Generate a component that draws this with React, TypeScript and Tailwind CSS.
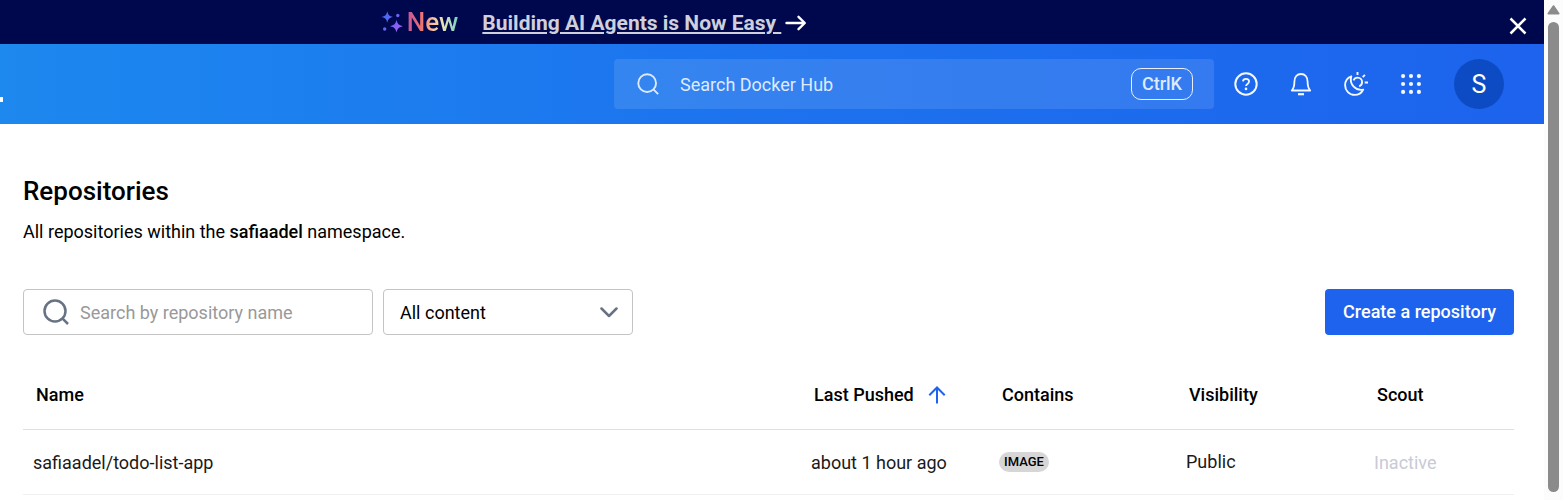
import type { ReactNode } from "react";

type Repository = {
  name: string;
  lastPushed: string;
  contains: string;
  visibility: string;
  scout: string;
};

const repositories: Repository[] = [
  {
    name: "safiaadel/todo-list-app",
    lastPushed: "about 1 hour ago",
    contains: "IMAGE",
    visibility: "Public",
    scout: "Inactive",
  },
];

function SearchIcon({ className, strokeWidth }: { className: string; strokeWidth: number }) {
  return (
    <svg viewBox="0 0 26 26" fill="none" stroke="currentColor" strokeWidth={strokeWidth} className={className} aria-hidden="true">
      <circle cx="12" cy="12" r="10.5" />
      <path d="M19.4 19.4 25 25" />
    </svg>
  );
}

function Sparkles() {
  return (
    <svg viewBox="0 0 22 22" className="h-[22px] w-[22px]" aria-hidden="true">
      <defs>
        <linearGradient id="sparkle" gradientUnits="userSpaceOnUse" x1="2" y1="4" x2="20" y2="18">
          <stop offset="0" stopColor="#3f6cf0" />
          <stop offset="0.5" stopColor="#6b62f2" />
          <stop offset="1" stopColor="#a35cf5" />
        </linearGradient>
      </defs>
      <g fill="url(#sparkle)">
        <path d="M6.3 0.3C7.200 4.100 8.200 5.100 12 6 8.200 6.900 7.200 7.900 6.300 11.700 5.400 7.900 4.400 6.900 0.600 6 4.400 5.100 5.400 4.100 6.300 0.300Z" />
        <path d="M15.500 8.800C16.500 13 17.700 14.200 21.900 15.200 17.700 16.200 16.500 17.400 15.500 21.600 14.500 17.400 13.300 16.200 9.100 15.200 13.300 14.200 14.500 13 15.500 8.800Z" />
        <circle cx="16.800" cy="4.500" r="1.700" />
        <circle cx="3.700" cy="18" r="1.700" />
      </g>
    </svg>
  );
}

function HelpIcon() {
  return (
    <svg viewBox="0 0 24 24" fill="none" stroke="currentColor" strokeWidth="2" className="h-6 w-6" aria-hidden="true">
      <circle cx="12" cy="12" r="10.700" />
      <path d="M8.900 9.400C9.200 7.700 10.400 6.900 12 6.900c1.800 0 3.100 1.100 3.100 2.700 0 2.300-3.100 2.300-3.100 4.500" strokeWidth="1.800" />
      <circle cx="12" cy="16.900" r="1.300" fill="currentColor" stroke="none" />
    </svg>
  );
}

function BellIcon() {
  return (
    <svg viewBox="0 0 24 24" fill="none" stroke="currentColor" strokeWidth="1.800" strokeLinejoin="round" className="h-6 w-6" aria-hidden="true">
      <path d="M2.800 18.500C4.600 16.500 5.400 13.500 5.400 9.800 5.400 5.100 8 2 12 2s6.600 3.100 6.600 7.800c0 3.700.8 6.700 2.600 8.700Z" />
      <path d="M9 22.200h6" strokeWidth="2.200" />
    </svg>
  );
}

function ThemeIcon() {
  return (
    <svg viewBox="0 0 24 24" fill="none" stroke="currentColor" strokeWidth="1.900" strokeLinejoin="round" className="h-6 w-6" aria-hidden="true">
      <path d="M7.300 4.300C3.500 5.700 1.100 9.200 1.100 13.200c0 5.400 4.200 9.700 9.600 9.700 3.700 0 6.900-2 8.500-5.300C12.200 19 4.800 12.500 7.300 4.300Z" />
      <path d="M9.500 8.400c.7-1.700 2.200-2.800 4.100-2.800 2.500 0 4.500 2 4.500 4.500 0 2-1.200 3.600-2.900 4.200" />
      <path d="M13.500 0v3M18.700 5.100l2.200-2.200M20.700 10.500H24" />
    </svg>
  );
}

function AppsIcon() {
  const stops = [2.3, 11, 19.7];
  return (
    <svg viewBox="0 0 22 22" fill="currentColor" className="h-5 w-5" aria-hidden="true">
      {stops.map((y) => stops.map((x) => <circle key={`${x}-${y}`} cx={x} cy={y} r="2.300" />))}
    </svg>
  );
}

function IconButton({ label, children }: { label: string; children: ReactNode }) {
  return (
    <button type="button" aria-label={label} className="flex h-10 w-10 items-center justify-center text-[#f3f7ff]">
      {children}
    </button>
  );
}

function Banner() {
  return (
    <div className="flex h-11 items-center bg-[#00084d] pr-4">
      <div className="flex flex-1 items-center justify-center pr-80">
        <Sparkles />
        <span className="ml-1 bg-[linear-gradient(90deg,#c4559a_0%,#ea7070_28%,#f9c59a_52%,#e6e6b4_72%,#74d0c4_100%)] bg-clip-text text-[26px] leading-8 font-medium text-transparent">
          New
        </span>
        <a href="#agents" className="ml-6 flex items-center gap-1 pt-[2px] text-[21px] leading-6 font-bold text-[#cfd0dc]">
          <span className="whitespace-pre underline decoration-2 underline-offset-2">{"Building AI Agents is Now Easy "}</span>
          <svg viewBox="0 0 22 16" fill="none" stroke="#fff" strokeWidth="2.400" strokeLinecap="round" strokeLinejoin="round" className="h-4 w-[22px]" aria-hidden="true">
            <path d="M1.500 8h18M13.500 1.800 19.800 8l-6.300 6.200" />
          </svg>
        </a>
      </div>
      <button type="button" aria-label="Close" className="mt-2 flex h-5 w-5 items-center justify-center text-white">
        <svg viewBox="0 0 18 18" fill="none" stroke="currentColor" strokeWidth="2.500" className="h-[18px] w-[18px]" aria-hidden="true">
          <path d="M1.500 1.500l15 15M16.500 1.500l-15 15" />
        </svg>
      </button>
    </div>
  );
}

function Header() {
  return (
    <header className="flex h-20 items-center bg-linear-to-r from-[#1d88ee] via-[#1d72ee] to-[#1d63ed] pr-10">
      <span className="mt-[31px] h-[5px] w-[3px] bg-white" />
      <div className="ml-auto flex h-[50px] w-[600px] items-center rounded bg-white/11 pr-[21px] pl-[23px] text-[#dfeaff]">
        <SearchIcon className="h-[22px] w-[22px] shrink-0" strokeWidth={2.2} />
        <input
          type="text"
          aria-label="Search Docker Hub"
          placeholder="Search Docker Hub"
          className="ml-[21px] h-[30px] min-w-0 flex-1 bg-transparent text-lg outline-none placeholder:text-[#dfeaff]"
        />
        <kbd className="flex h-8 items-center rounded-[10px] border border-[#e8f0ff] px-[10px] font-['Roboto',sans-serif] text-lg font-medium">
          CtrlK
        </kbd>
      </div>
      <nav className="ml-3 flex items-center gap-[15px]">
        <IconButton label="Help"><HelpIcon /></IconButton>
        <IconButton label="Notifications"><BellIcon /></IconButton>
        <IconButton label="Theme"><ThemeIcon /></IconButton>
        <IconButton label="Apps"><AppsIcon /></IconButton>
      </nav>
      <button type="button" className="ml-[23px] flex h-[50px] w-[50px] items-center justify-center rounded-full bg-[#0d4bc4] pt-[2px] text-[25px] text-white">
        S
      </button>
    </header>
  );
}

function Toolbar() {
  return (
    <div className="mt-[43px] flex items-center gap-[10px]">
      <div className="flex h-[46px] w-[350px] items-center rounded border border-[#c4c4c4] pl-[19px] text-[#677285]">
        <SearchIcon className="h-[26px] w-[26px] shrink-0" strokeWidth={2.5} />
        <input
          type="text"
          aria-label="Search by repository name"
          placeholder="Search by repository name"
          className="ml-[11px] h-[30px] min-w-0 flex-1 bg-transparent text-lg text-black outline-none placeholder:text-[#999]"
        />
      </div>
      <div className="relative w-[250px]">
        <select aria-label="Content type" className="h-[46px] w-full appearance-none rounded border border-[#c4c4c4] bg-white pt-[2px] pl-4 text-lg text-black">
          <option>All content</option>
        </select>
        <svg viewBox="0 0 18 11" fill="none" stroke="#677285" strokeWidth="2.500" strokeLinecap="round" strokeLinejoin="round" className="pointer-events-none absolute top-[18px] right-[15px] h-[11px] w-[18px]" aria-hidden="true">
          <path d="M1.500 1.500 9 9l7.500-7.500" />
        </svg>
      </div>
      <button type="button" className="ml-auto h-[46px] rounded bg-[#1d63ed] px-[18px] text-lg font-medium text-white">
        Create a repository
      </button>
    </div>
  );
}

function RepositoryTable() {
  return (
    <table className="mt-[25px] w-full table-fixed text-left text-lg">
      <thead>
        <tr className="h-[69px] border-b border-[#e0e0e0] text-black">
          <th className="pt-px pl-[13px] font-medium">Name</th>
          <th className="w-[188px] pt-px pl-[13px] font-medium">
            <span className="flex items-center gap-[14px]">
              Last Pushed
              <svg viewBox="0 0 18 18" fill="none" stroke="#1d63ed" strokeWidth="2" className="h-[18px] w-[18px]" aria-hidden="true">
                <path d="M9 17.500V1.800M1.300 9.200 9 1.500l7.700 7.700" />
              </svg>
            </span>
          </th>
          <th className="w-[187px] pt-px pl-[13px] font-medium">Contains</th>
          <th className="w-[188px] pt-px pl-[13px] font-medium">Visibility</th>
          <th className="w-[150px] pt-px pl-[13px] font-medium">Scout</th>
        </tr>
      </thead>
      <tbody>
        {repositories.map((repo) => (
          <tr key={repo.name} className="h-[65px] border-b border-[#f0f0f0] text-[#1a1a1a]">
            <td className="pt-[2px] pl-[10px]">{repo.name}</td>
            <td className="pt-[2px] pl-[10px]">{repo.lastPushed}</td>
            <td className="pl-[10px]">
              <span className="flex h-5 w-fit items-center rounded-full bg-[#d6d6d6] px-[5px] pt-[2px] text-[13px] font-medium text-black">
                {repo.contains}
              </span>
            </td>
            <td className="pl-[10px]">{repo.visibility}</td>
            <td className="pt-[2px] pl-[10px] text-[#c8cad6]">{repo.scout}</td>
          </tr>
        ))}
      </tbody>
    </table>
  );
}

function Scrollbar() {
  return (
    <div className="flex w-[19px] shrink-0 flex-col items-center bg-[#fcfcfc] pt-[5px] pb-2" aria-hidden="true">
      <svg viewBox="0 0 13 10" className="h-[10px] w-[13px]">
        <path d="M6.500 1.200 11.500 8.500H1.500Z" fill="#8b8b8b" stroke="#8b8b8b" strokeWidth="2" strokeLinejoin="round" />
      </svg>
      <div className="mt-[7px] w-[11px] flex-1 rounded-full bg-[#8b8b8b]" />
    </div>
  );
}

export default function App() {
  return (
    <div className="flex min-h-screen bg-white font-['Roboto',sans-serif]">
      <div className="min-w-0 flex-1">
        <Banner />
        <Header />
        <main className="pt-[50px] pr-[30px] pl-[23px]">
          <h1 className="text-[26px] leading-[34px] font-medium text-black">Repositories</h1>
          <p className="mt-[10px] text-lg text-black">
            All repositories within the <strong className="font-medium">safiaadel</strong> namespace.
          </p>
          <Toolbar />
          <RepositoryTable />
        </main>
      </div>
      <Scrollbar />
    </div>
  );
}
